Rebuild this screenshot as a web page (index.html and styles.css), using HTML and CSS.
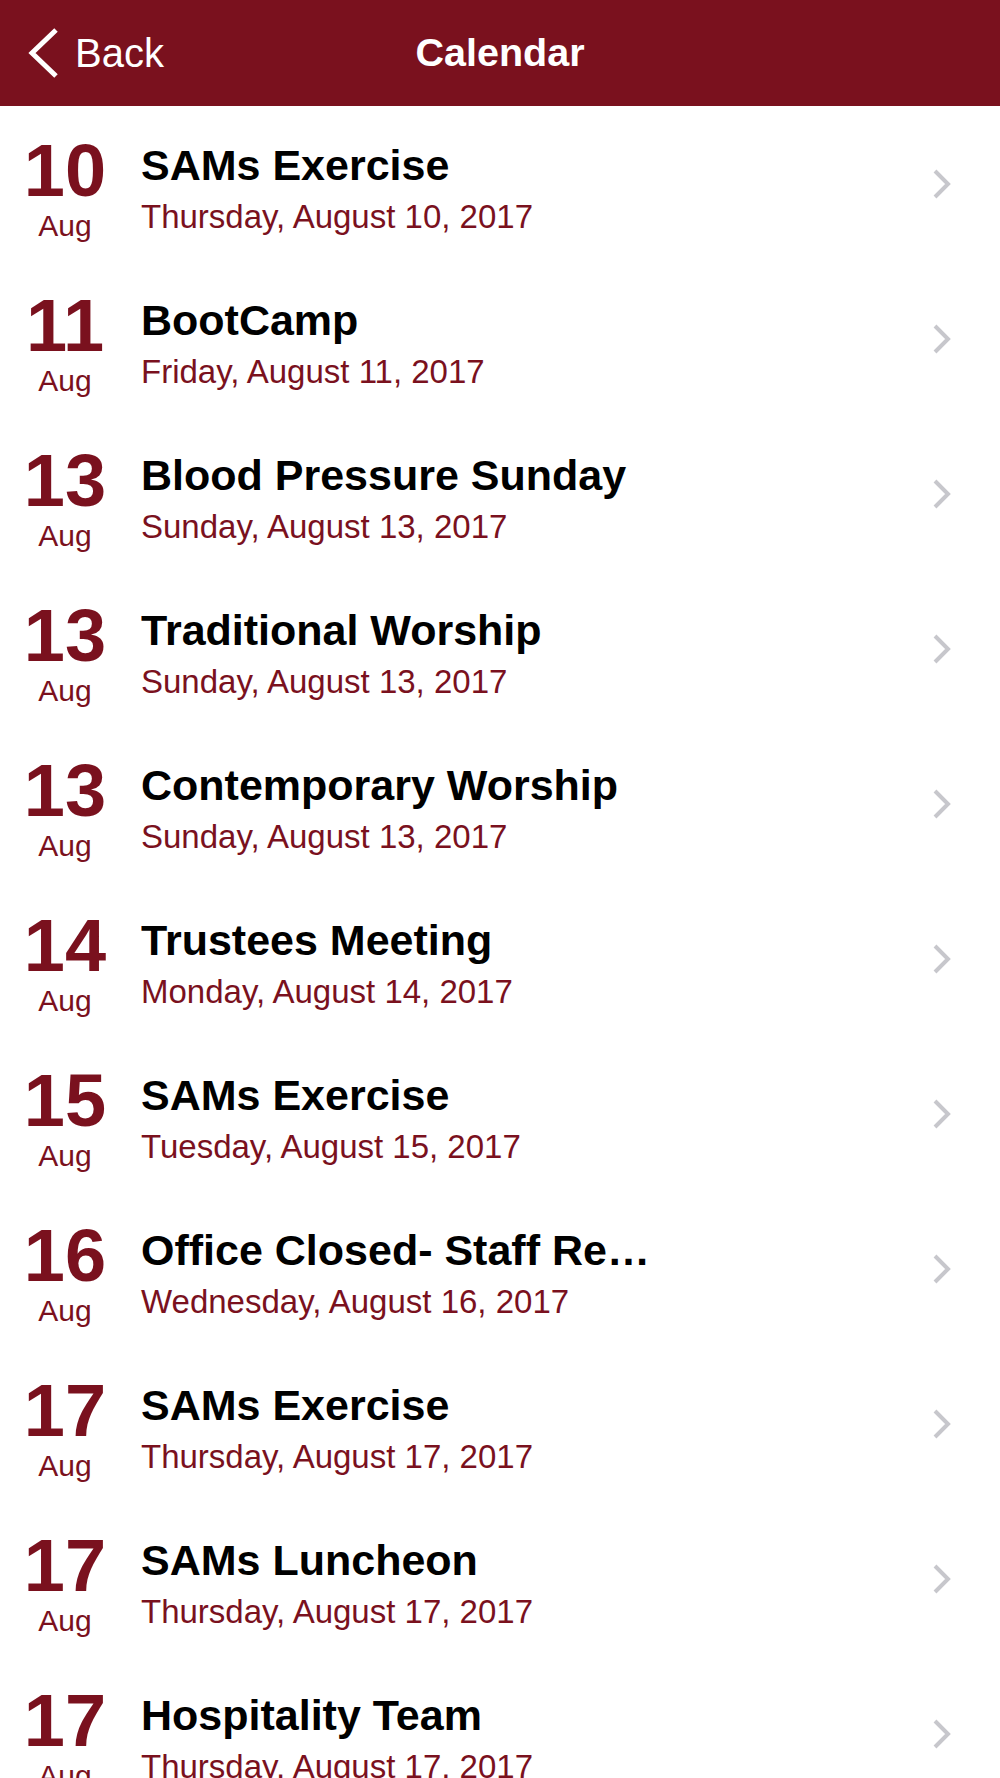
FILE: index.html
```html
<!DOCTYPE html>
<html lang="en">
<head>
  <meta charset="UTF-8">
  <title>Calendar</title>
  <meta name="viewport" content="width=device-width, initial-scale=1.0">
  <link rel="stylesheet" href="styles.css">
</head>
<body>

<header class="nav-bar">
  <a class="back-btn" href="#">
    <svg class="back-icon" width="34" height="56" viewBox="0 0 34 56">
      <path d="M30 5 L6 28 L30 51" fill="none" stroke="#fff" stroke-width="5"/>
    </svg>
    <span>Back</span>
  </a>
  <h1 class="nav-title">Calendar</h1>
  <div></div>
</header>

<ul class="event-list">
  <li class="event-row">
    <div class="event-date"><span class="day">10</span><span class="month">Aug</span></div>
    <div class="event-info">
      <div class="event-title">SAMs Exercise</div>
      <div class="event-when">Thursday, August 10, 2017</div>
    </div>
    <svg class="chevron" width="20" height="32" viewBox="0 0 20 32"><path d="M3 3 L16 16 L3 29" fill="none" stroke="#c7c7cc" stroke-width="4"/></svg>
  </li>
  <li class="event-row">
    <div class="event-date"><span class="day">11</span><span class="month">Aug</span></div>
    <div class="event-info">
      <div class="event-title">BootCamp</div>
      <div class="event-when">Friday, August 11, 2017</div>
    </div>
    <svg class="chevron" width="20" height="32" viewBox="0 0 20 32"><path d="M3 3 L16 16 L3 29" fill="none" stroke="#c7c7cc" stroke-width="4"/></svg>
  </li>
  <li class="event-row">
    <div class="event-date"><span class="day">13</span><span class="month">Aug</span></div>
    <div class="event-info">
      <div class="event-title">Blood Pressure Sunday</div>
      <div class="event-when">Sunday, August 13, 2017</div>
    </div>
    <svg class="chevron" width="20" height="32" viewBox="0 0 20 32"><path d="M3 3 L16 16 L3 29" fill="none" stroke="#c7c7cc" stroke-width="4"/></svg>
  </li>
  <li class="event-row">
    <div class="event-date"><span class="day">13</span><span class="month">Aug</span></div>
    <div class="event-info">
      <div class="event-title">Traditional Worship</div>
      <div class="event-when">Sunday, August 13, 2017</div>
    </div>
    <svg class="chevron" width="20" height="32" viewBox="0 0 20 32"><path d="M3 3 L16 16 L3 29" fill="none" stroke="#c7c7cc" stroke-width="4"/></svg>
  </li>
  <li class="event-row">
    <div class="event-date"><span class="day">13</span><span class="month">Aug</span></div>
    <div class="event-info">
      <div class="event-title">Contemporary Worship</div>
      <div class="event-when">Sunday, August 13, 2017</div>
    </div>
    <svg class="chevron" width="20" height="32" viewBox="0 0 20 32"><path d="M3 3 L16 16 L3 29" fill="none" stroke="#c7c7cc" stroke-width="4"/></svg>
  </li>
  <li class="event-row">
    <div class="event-date"><span class="day">14</span><span class="month">Aug</span></div>
    <div class="event-info">
      <div class="event-title">Trustees Meeting</div>
      <div class="event-when">Monday, August 14, 2017</div>
    </div>
    <svg class="chevron" width="20" height="32" viewBox="0 0 20 32"><path d="M3 3 L16 16 L3 29" fill="none" stroke="#c7c7cc" stroke-width="4"/></svg>
  </li>
  <li class="event-row">
    <div class="event-date"><span class="day">15</span><span class="month">Aug</span></div>
    <div class="event-info">
      <div class="event-title">SAMs Exercise</div>
      <div class="event-when">Tuesday, August 15, 2017</div>
    </div>
    <svg class="chevron" width="20" height="32" viewBox="0 0 20 32"><path d="M3 3 L16 16 L3 29" fill="none" stroke="#c7c7cc" stroke-width="4"/></svg>
  </li>
  <li class="event-row">
    <div class="event-date"><span class="day">16</span><span class="month">Aug</span></div>
    <div class="event-info">
      <div class="event-title">Office Closed- Staff Retreat</div>
      <div class="event-when">Wednesday, August 16, 2017</div>
    </div>
    <svg class="chevron" width="20" height="32" viewBox="0 0 20 32"><path d="M3 3 L16 16 L3 29" fill="none" stroke="#c7c7cc" stroke-width="4"/></svg>
  </li>
  <li class="event-row">
    <div class="event-date"><span class="day">17</span><span class="month">Aug</span></div>
    <div class="event-info">
      <div class="event-title">SAMs Exercise</div>
      <div class="event-when">Thursday, August 17, 2017</div>
    </div>
    <svg class="chevron" width="20" height="32" viewBox="0 0 20 32"><path d="M3 3 L16 16 L3 29" fill="none" stroke="#c7c7cc" stroke-width="4"/></svg>
  </li>
  <li class="event-row">
    <div class="event-date"><span class="day">17</span><span class="month">Aug</span></div>
    <div class="event-info">
      <div class="event-title">SAMs Luncheon</div>
      <div class="event-when">Thursday, August 17, 2017</div>
    </div>
    <svg class="chevron" width="20" height="32" viewBox="0 0 20 32"><path d="M3 3 L16 16 L3 29" fill="none" stroke="#c7c7cc" stroke-width="4"/></svg>
  </li>
  <li class="event-row">
    <div class="event-date"><span class="day">17</span><span class="month">Aug</span></div>
    <div class="event-info">
      <div class="event-title">Hospitality Team</div>
      <div class="event-when">Thursday, August 17, 2017</div>
    </div>
    <svg class="chevron" width="20" height="32" viewBox="0 0 20 32"><path d="M3 3 L16 16 L3 29" fill="none" stroke="#c7c7cc" stroke-width="4"/></svg>
  </li>
</ul>

</body>
</html>
```

FILE: styles.css
```css
* {
  margin: 0;
  padding: 0;
  box-sizing: border-box;
}

body {
  font-family: "Liberation Sans", Arial, sans-serif;
  background-color: #fff;
  color: #000;
  overflow: hidden;
}

.nav-bar {
  height: 106px;
  background-color: #7a111e;
  color: #fff;
  display: grid;
  grid-template-columns: 1fr auto 1fr;
  align-items: center;
}

.back-btn {
  display: flex;
  align-items: center;
  gap: 15px;
  padding-left: 26px;
  color: #fff;
  text-decoration: none;
  font-size: 40px;
  line-height: 1;
}

.back-icon {
  display: block;
}

.nav-title {
  font-size: 39.5px;
  font-weight: bold;
  line-height: 1;
}

.event-list {
  list-style: none;
}

.event-row {
  height: 155px;
  display: flex;
  align-items: flex-start;
  padding-right: 48px;
}

.event-date {
  width: 130px;
  padding-top: 28px;
  text-align: center;
  color: #7a111e;
}

.day {
  display: block;
  font-size: 74px;
  font-weight: bold;
  line-height: 74px;
}

.month {
  display: block;
  font-size: 30px;
  line-height: 36px;
}

.event-info {
  width: 518px;
  min-width: 0;
  margin-left: 11px;
  padding-top: 34px;
}

.event-title {
  font-size: 43px;
  font-weight: bold;
  line-height: 50px;
  white-space: nowrap;
  overflow: hidden;
  text-overflow: ellipsis;
}

.event-when {
  font-size: 33px;
  line-height: 40px;
  margin-top: 7px;
  color: #7a111e;
  white-space: nowrap;
}

.chevron {
  margin-left: auto;
  align-self: center;
  display: block;
}
```
